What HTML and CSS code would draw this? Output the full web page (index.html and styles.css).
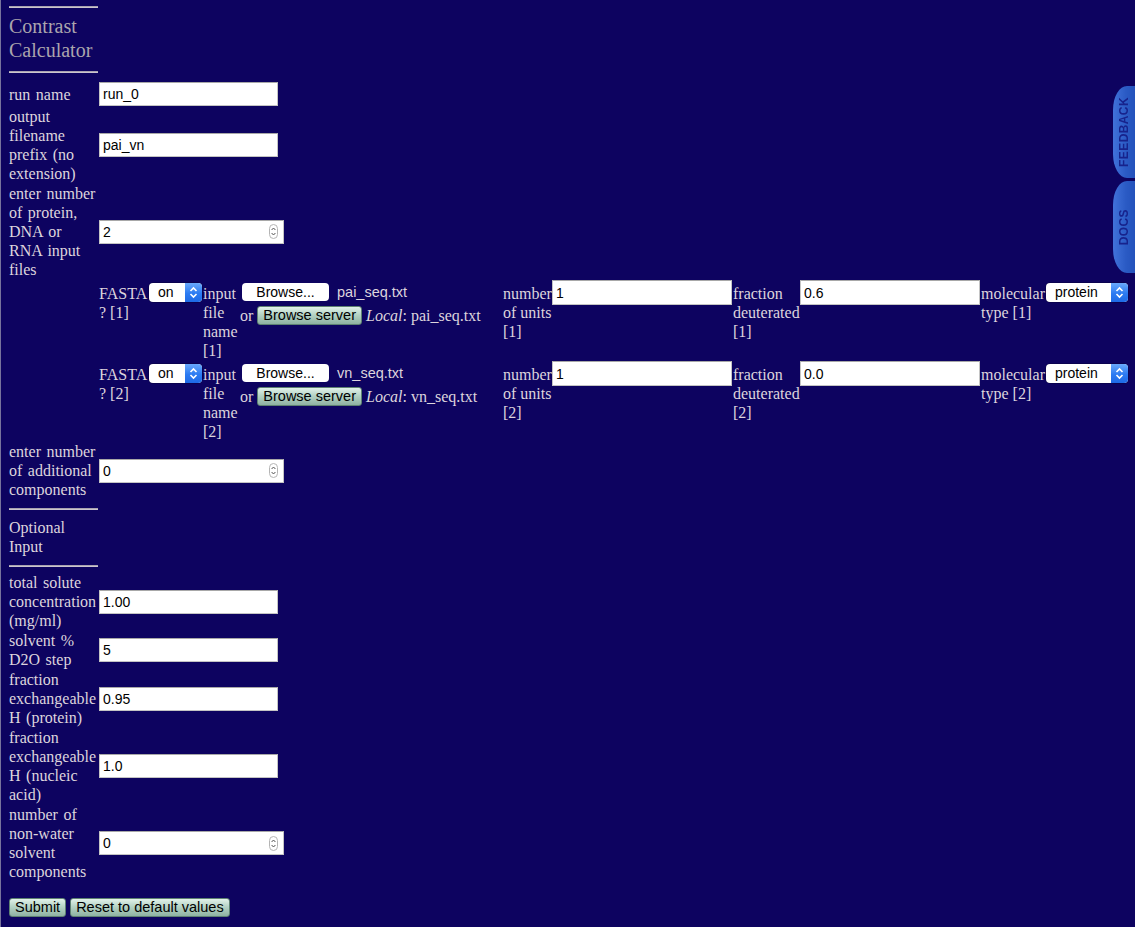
FILE: index.html
```html
<!DOCTYPE html>
<html lang="en">
<head>
<meta charset="utf-8">
<title>Contrast Calculator</title>
<link rel="stylesheet" href="styles.css">
</head>
<body>
<div class="page">
  <form class="form">
    <div class="head">
      <div class="rule"></div>
      <h1 class="title">Contrast Calculator</h1>
      <div class="rule rule-low"></div>
    </div>

    <label class="lbl">run name</label>
    <div class="fld"><input class="txt" type="text" value="run_0"></div>

    <label class="lbl">output filename prefix (no extension)</label>
    <div class="fld"><input class="txt" type="text" value="pai_vn"></div>

    <label class="lbl">enter number of protein, DNA or RNA input files</label>
    <div class="fld">
      <div class="num"><input class="num-in" type="text" value="2"><svg class="spin" width="9" height="15" viewBox="0 0 9 15"><rect x="0.5" y="0.5" width="8" height="14" rx="4" fill="#fff" stroke="#b4b4b4"/><path d="M2.6 6 L4.5 4 L6.4 6" fill="none" stroke="#555" stroke-width="1"/><path d="M2.6 9 L4.5 11 L6.4 9" fill="none" stroke="#555" stroke-width="1"/></svg></div>
    </div>

    <div class="comps">
      <div class="clbl">FASTA ? [1]</div>
      <div class="sel sel-on"><span class="sel-val">on</span><span class="sel-arrow"><svg width="9" height="13" viewBox="0 0 9 13"><path d="M1.5 5 L4.5 2 L7.5 5" fill="none" stroke="#fff" stroke-width="1.6"/><path d="M1.5 8 L4.5 11 L7.5 8" fill="none" stroke="#fff" stroke-width="1.6"/></svg></span></div>
      <div class="clbl">input file name [1]</div>
      <div class="files">
        <div class="fline"><span class="fbtn">Browse...</span><span class="fname">pai_seq.txt</span></div>
        <div class="sline"><span>or</span><button class="gbtn" type="button">Browse server</button><span><i>Local</i>: pai_seq.txt</span></div>
      </div>
      <div class="clbl">number of units [1]</div>
      <input class="cin" type="text" value="1">
      <div class="clbl">fraction deuterated [1]</div>
      <input class="cin" type="text" value="0.6">
      <div class="clbl">molecular type [1]</div>
      <div class="sel sel-mol"><span class="sel-val">protein</span><span class="sel-arrow"><svg width="9" height="13" viewBox="0 0 9 13"><path d="M1.5 5 L4.5 2 L7.5 5" fill="none" stroke="#fff" stroke-width="1.6"/><path d="M1.5 8 L4.5 11 L7.5 8" fill="none" stroke="#fff" stroke-width="1.6"/></svg></span></div>

      <div class="clbl">FASTA ? [2]</div>
      <div class="sel sel-on"><span class="sel-val">on</span><span class="sel-arrow"><svg width="9" height="13" viewBox="0 0 9 13"><path d="M1.5 5 L4.5 2 L7.5 5" fill="none" stroke="#fff" stroke-width="1.6"/><path d="M1.5 8 L4.5 11 L7.5 8" fill="none" stroke="#fff" stroke-width="1.6"/></svg></span></div>
      <div class="clbl">input file name [2]</div>
      <div class="files">
        <div class="fline"><span class="fbtn">Browse...</span><span class="fname">vn_seq.txt</span></div>
        <div class="sline"><span>or</span><button class="gbtn" type="button">Browse server</button><span><i>Local</i>: vn_seq.txt</span></div>
      </div>
      <div class="clbl">number of units [2]</div>
      <input class="cin" type="text" value="1">
      <div class="clbl">fraction deuterated [2]</div>
      <input class="cin" type="text" value="0.0">
      <div class="clbl">molecular type [2]</div>
      <div class="sel sel-mol"><span class="sel-val">protein</span><span class="sel-arrow"><svg width="9" height="13" viewBox="0 0 9 13"><path d="M1.5 5 L4.5 2 L7.5 5" fill="none" stroke="#fff" stroke-width="1.6"/><path d="M1.5 8 L4.5 11 L7.5 8" fill="none" stroke="#fff" stroke-width="1.6"/></svg></span></div>
    </div>

    <label class="lbl">enter number of additional components</label>
    <div class="fld">
      <div class="num"><input class="num-in" type="text" value="0"><svg class="spin" width="9" height="15" viewBox="0 0 9 15"><rect x="0.5" y="0.5" width="8" height="14" rx="4" fill="#fff" stroke="#b4b4b4"/><path d="M2.6 6 L4.5 4 L6.4 6" fill="none" stroke="#555" stroke-width="1"/><path d="M2.6 9 L4.5 11 L6.4 9" fill="none" stroke="#555" stroke-width="1"/></svg></div>
    </div>

    <div class="section">
      <div class="rule"></div>
      <div class="sec-title">Optional Input</div>
      <div class="rule rule-low"></div>
    </div>

    <label class="lbl">total solute concentration (mg/ml)</label>
    <div class="fld"><input class="txt" type="text" value="1.00"></div>

    <label class="lbl">solvent % D2O step</label>
    <div class="fld"><input class="txt" type="text" value="5"></div>

    <label class="lbl">fraction exchangeable H (protein)</label>
    <div class="fld"><input class="txt" type="text" value="0.95"></div>

    <label class="lbl">fraction exchangeable H (nucleic acid)</label>
    <div class="fld"><input class="txt" type="text" value="1.0"></div>

    <label class="lbl">number of non-water solvent components</label>
    <div class="fld">
      <div class="num"><input class="num-in" type="text" value="0"><svg class="spin" width="9" height="15" viewBox="0 0 9 15"><rect x="0.5" y="0.5" width="8" height="14" rx="4" fill="#fff" stroke="#b4b4b4"/><path d="M2.6 6 L4.5 4 L6.4 6" fill="none" stroke="#555" stroke-width="1"/><path d="M2.6 9 L4.5 11 L6.4 9" fill="none" stroke="#555" stroke-width="1"/></svg></div>
    </div>
  </form>

  <div class="actions">
    <button class="gbtn" type="button">Submit</button>
    <button class="gbtn" type="button">Reset to default values</button>
  </div>
</div>

<div class="tabs">
  <a class="tab"><span>FEEDBACK</span></a>
  <a class="tab"><span>DOCS</span></a>
</div>
</body>
</html>
```

FILE: styles.css
```css
html, body {
  margin: 0;
  padding: 0;
  background: #0d0360;
}

body {
  font-family: "Liberation Serif", "Times New Roman", serif;
  font-size: 16px;
  line-height: 19px;
  color: #ddd5dd;
}

.page {
  min-height: 100vh;
  box-sizing: border-box;
  border-left: 1px solid #77739c;
  padding: 6px 0 10px 8px;
}

.form {
  display: grid;
  grid-template-columns: 89px auto;
  column-gap: 1px;
  row-gap: 1px;
  align-items: center;
  justify-items: start;
  margin: 0;
}

.head {
  grid-column: 1 / -1;
  width: 89px;
  padding-bottom: 8px;
}

.rule {
  height: 0;
  border-top: 1px solid #a9a3b0;
  border-bottom: 1px solid #cbc5cf;
}

.rule-low {
  margin-top: 9px;
}

.title {
  margin: 6px 0 0;
  font-family: "Liberation Serif", "Times New Roman", serif;
  font-size: 20px;
  line-height: 24px;
  font-weight: normal;
  color: #aba5ad;
}

.lbl {
  grid-column: 1;
  width: 89px;
  word-spacing: 1.5px;
}

.fld {
  grid-column: 2;
}

.txt {
  box-sizing: border-box;
  width: 179px;
  height: 24px;
  margin: 0;
  padding: 0 3px;
  border: 1px solid #c4c4c4;
  border-top-color: #a8a8a8;
  background: #fff;
  font-family: "Liberation Sans", Arial, sans-serif;
  font-size: 14px;
  color: #000;
  outline: none;
}

.num {
  box-sizing: border-box;
  width: 185px;
  height: 24px;
  display: flex;
  align-items: center;
  border: 1px solid #c4c4c4;
  border-top-color: #a8a8a8;
  background: #fff;
  padding-right: 5px;
}

.num-in {
  flex: 1;
  min-width: 0;
  border: 0;
  margin: 0;
  padding: 0 3px;
  font-family: "Liberation Sans", Arial, sans-serif;
  font-size: 14px;
  color: #000;
  background: transparent;
  outline: none;
}

.spin {
  display: block;
}

.comps {
  grid-column: 2;
  display: grid;
  grid-template-columns: 50px 54px 37px 263px 49px 181px 67px 181px 65px 82px;
  grid-auto-rows: 80px;
  row-gap: 1px;
  align-items: start;
  justify-items: start;
}

.clbl {
  padding-top: 4px;
}

.sel {
  box-sizing: border-box;
  display: flex;
  height: 19px;
  margin-top: 3px;
  border-radius: 4px;
  overflow: hidden;
  background: #fff;
  box-shadow: 0 0 0 0.5px rgba(0, 0, 0, 0.35);
}

.sel-on {
  width: 53px;
}

.sel-mol {
  width: 82px;
}

.sel-val {
  flex: 1;
  padding-left: 9px;
  font-family: "Liberation Sans", Arial, sans-serif;
  font-size: 14px;
  line-height: 19px;
  color: #000;
}

.sel-arrow {
  width: 17px;
  display: flex;
  align-items: center;
  justify-content: center;
  background: linear-gradient(#6aa9fc, #2c7bf2 55%, #1e6ae6);
}

.files {
  padding-top: 3px;
}

.fline {
  display: flex;
  align-items: center;
  gap: 8px;
  height: 18px;
  padding-left: 2px;
}

.fbtn {
  width: 87px;
  height: 18px;
  border-radius: 4px;
  background: #fff;
  color: #000;
  text-align: center;
  font-family: "Liberation Sans", Arial, sans-serif;
  font-size: 14px;
  line-height: 18px;
}

.fname {
  font-family: "Liberation Sans", Arial, sans-serif;
  font-size: 14.5px;
  color: #ddd5dd;
}

.sline {
  display: flex;
  align-items: center;
  gap: 4px;
  height: 20px;
  margin-top: 4px;
  white-space: nowrap;
}

.gbtn {
  box-sizing: border-box;
  height: 19px;
  margin: 0;
  padding: 0 5px;
  border: 1px solid #5e8272;
  border-radius: 3px;
  background: linear-gradient(#e2f2ea, #b5d3c5 45%, #8fb2a2);
  font-family: "Liberation Sans", Arial, sans-serif;
  font-size: 14.5px;
  line-height: 17px;
  color: #000;
}

.cin {
  box-sizing: border-box;
  width: 180px;
  height: 25px;
  margin: 0;
  padding: 0 3px;
  border: 1px solid #c4c4c4;
  border-top-color: #a8a8a8;
  background: #fff;
  font-family: "Liberation Sans", Arial, sans-serif;
  font-size: 14px;
  color: #000;
  outline: none;
}

.section {
  grid-column: 1 / -1;
  width: 89px;
  padding-top: 8px;
  padding-bottom: 5px;
}

.sec-title {
  margin-top: 8px;
}

.actions {
  display: flex;
  gap: 4px;
  margin-top: 17px;
}

.tabs {
  position: fixed;
  top: 86px;
  right: 0;
  display: flex;
  flex-direction: column;
  gap: 3px;
}

.tab {
  width: 22px;
  height: 92px;
  display: flex;
  align-items: center;
  justify-content: center;
  border-radius: 14px 0 0 14px / 24px 0 0 24px;
  background: linear-gradient(to right, #4172da, #2a5ac4 60%, #2452bb);
}

.tab span {
  writing-mode: vertical-rl;
  transform: rotate(180deg);
  font-family: "Liberation Sans", Arial, sans-serif;
  font-weight: bold;
  font-size: 12px;
  letter-spacing: 0.4px;
  color: #17238c;
}
```
